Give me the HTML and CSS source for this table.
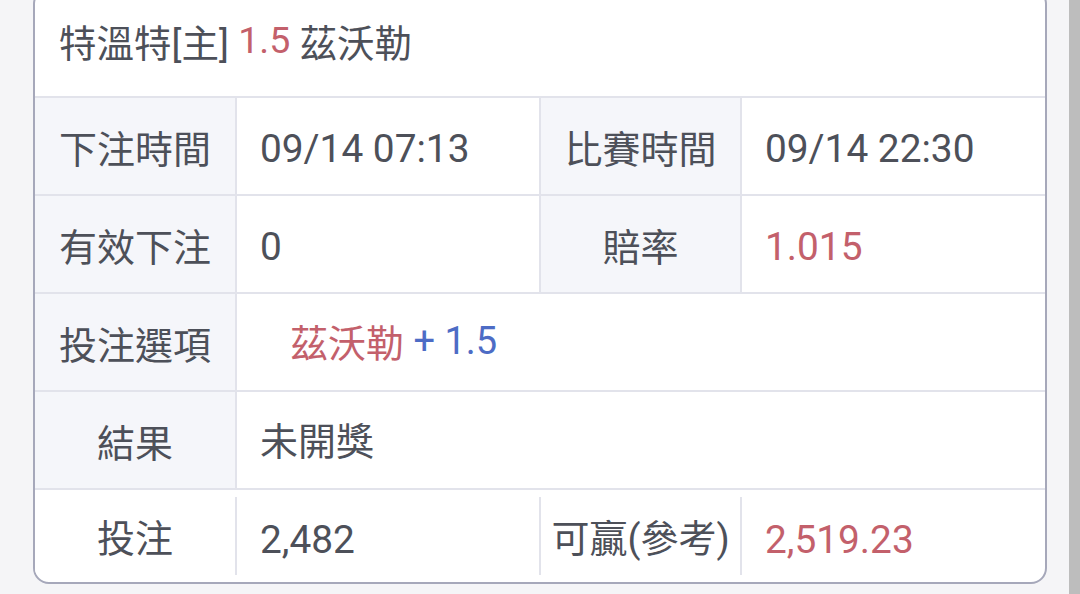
FILE: index.html
```html
<!DOCTYPE html>
<html lang="zh-Hant">
<head>
<meta charset="utf-8">
<link rel="stylesheet" href="styles.css">
</head>
<body>
<div class="page">
  <main class="main">
    <section class="card">
      <header class="card-head">特溫特[主] <span class="red">1.5</span> 茲沃勒</header>
      <div class="row">
        <div class="cell label">下注時間</div>
        <div class="cell value num">09/14 07:13</div>
        <div class="cell label">比賽時間</div>
        <div class="cell value num last">09/14 22:30</div>
      </div>
      <div class="row">
        <div class="cell label">有效下注</div>
        <div class="cell value num">0</div>
        <div class="cell label">賠率</div>
        <div class="cell value num last red">1.015</div>
      </div>
      <div class="row">
        <div class="cell label">投注選項</div>
        <div class="cell value span pick"><span class="red">茲沃勒</span>&nbsp;<span class="blue">+ 1.5</span></div>
      </div>
      <div class="row">
        <div class="cell label">結果</div>
        <div class="cell value span">未開獎</div>
      </div>
      <div class="row row-foot">
        <div class="cell label plain">投注</div>
        <div class="cell value num">2,482</div>
        <div class="cell label plain">可贏(參考)</div>
        <div class="cell value num last red">2,519.23</div>
      </div>
    </section>
  </main>
  <div class="scrollbar"></div>
</div>
</body>
</html>
```

FILE: styles.css
```css
* { box-sizing: border-box; }
html, body { margin: 0; padding: 0; }
body {
  background: #f5f5f7;
  font-family: "Roboto", "Noto Sans CJK TC", sans-serif;
  color: #4d5059;
  overflow: hidden;
}
.page {
  display: flex;
  width: 1080px;
  height: 594px;
}
.main {
  flex: 1;
  padding-left: 33px;
}
.scrollbar {
  width: 11px;
  background: #bdbdbd;
}
.card {
  width: 1014px;
  margin-top: -12px;
  background: #fff;
  border: 2px solid #a6a8ba;
  border-radius: 16px;
  overflow: hidden;
}
.card-head {
  height: 106px;
  display: flex;
  align-items: center;
  padding-left: 24px;
  padding-bottom: 6px;
  font-size: 37.5px;
  white-space: pre;
}
.red { color: #c3606b; }
.blue { color: #4d6cc5; }
.row {
  display: grid;
  grid-template-columns: 202px 304px 201px 303px;
  height: 98px;
  border-top: 2px solid #e2e3eb;
}
.cell {
  display: flex;
  align-items: center;
  font-size: 38px;
  border-right: 2px solid #e2e3eb;
}
.cell.last { border-right: none; }
.label {
  justify-content: center;
  background: #f5f6fa;
}
.value {
  padding-left: 23px;
  padding-bottom: 3px;
}
.value.num {
  font-size: 38.8px;
  padding-top: 4px;
  padding-bottom: 0;
}
.span {
  grid-column: 2 / 5;
  border-right: none;
}
.pick { padding-left: 53px; }
.row-foot {
  height: 94px;
  align-items: stretch;
}
.row-foot .cell {
  margin: 7px 0;
}
.row-foot .label { padding-bottom: 2px; }
.row-foot .value.num { padding-top: 6px; }
.plain { background: #fff; }
```
